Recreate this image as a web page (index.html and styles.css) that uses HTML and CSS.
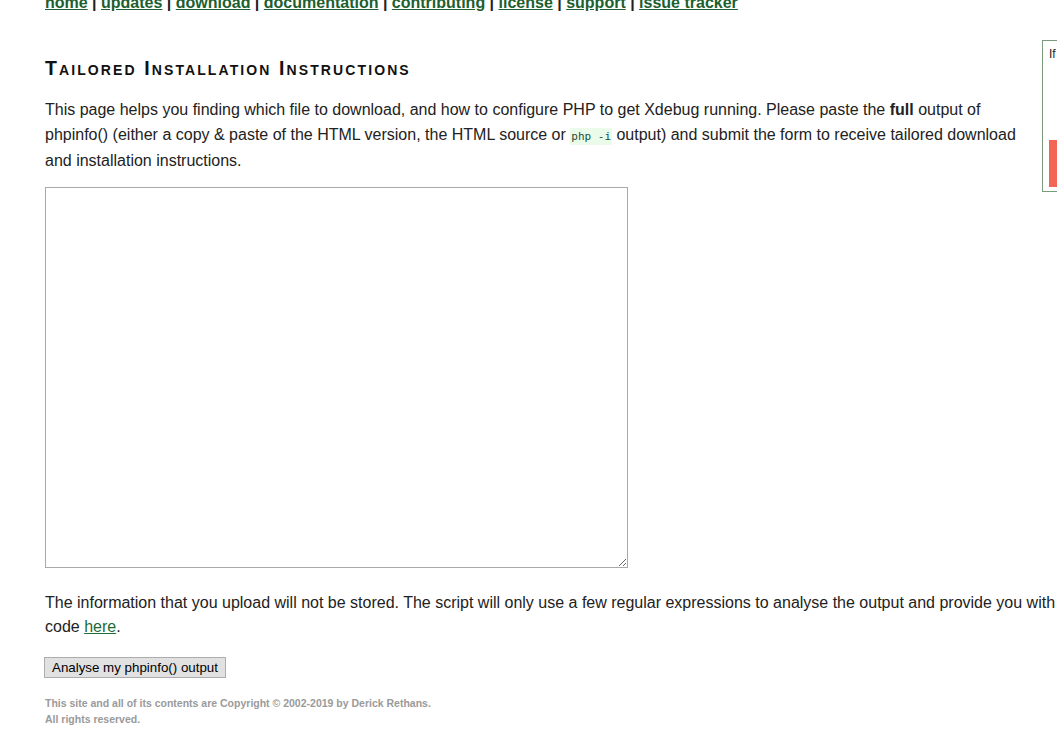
FILE: index.html
```html
<!DOCTYPE html>
<html lang="en">
<head>
<meta charset="utf-8">
<title>Xdebug: Tailored Installation Instructions</title>
<link rel="stylesheet" href="styles.css">
</head>
<body>
<div class="page">
  <nav class="menu">
    <a href="#">home</a> | <a href="#">updates</a> | <a href="#">download</a> | <a href="#">documentation</a> | <a href="#">contributing</a> | <a href="#">license</a> | <a href="#">support</a> | <a href="#">issue tracker</a>
  </nav>
  <div class="content">
    <aside class="sidebar">
      <p class="sidebar-text">If you find Xdebug useful</p>
      <a class="donate" href="#">Donate</a>
    </aside>
    <h2 class="title">Tailored Installation Instructions</h2>
    <p class="text">This page helps you finding which file to download, and how to configure PHP to get Xdebug running. Please paste the <b>full</b> output of phpinfo() (either a copy &amp; paste of the HTML version, the HTML source or <code class="code">php -i</code> output) and submit the form to receive tailored download and installation instructions.</p>
    <form class="wizard">
      <textarea class="paste" name="data"></textarea>
      <p class="text">The information that you upload will not be stored. The script will only use a few regular expressions to analyse the output and provide you with its source code <a class="link" href="#">here</a>.</p>
      <button class="submit" type="button">Analyse my phpinfo() output</button>
    </form>
    <footer class="footer">This site and all of its contents are Copyright &copy; 2002-2019 by Derick Rethans.<br>All rights reserved.</footer>
  </div>
</div>
</body>
</html>
```
FILE: styles.css
```css
html {
  overflow: hidden;
}
body {
  margin: 0;
  font-family: "Liberation Sans", Arial, sans-serif;
  color: #222;
  background: #fff;
}
.page {
  width: 1100px;
  padding-left: 45px;
}
.menu {
  margin-top: -6px;
  font-size: 16px;
  line-height: 18px;
  font-weight: bold;
  color: #222;
}
.menu a {
  color: #1d5f2f;
  text-decoration: underline;
}
.content {
  display: flow-root;
  margin-top: -2px;
}
.sidebar {
  float: right;
  width: 90px;
  height: 141px;
  margin: 30px 0 0 10px;
  padding: 5px 5px 4px 6px;
  border: 1px solid #7b9a7b;
  display: flex;
  flex-direction: column;
  justify-content: space-between;
}
.sidebar-text {
  margin: 0;
  font-size: 12px;
  line-height: 16px;
  white-space: nowrap;
  color: #222;
}
.donate {
  display: block;
  height: 47px;
  background: #f26656;
  color: #fff;
  text-decoration: none;
  font-size: 14px;
  line-height: 47px;
  padding-left: 20px;
}
.title {
  margin: 47px 0 19px;
  font-size: 19.5px;
  line-height: 22px;
  letter-spacing: 2.1px;
  font-variant: small-caps;
  font-weight: bold;
  color: #111;
}
.text {
  margin: 0;
  font-size: 16px;
  line-height: 24.5px;
}
.content > .text {
  margin-bottom: 13px;
}
.code {
  font-family: "DejaVu Sans Mono", monospace;
  font-size: 11px;
  background: #eafbea;
  color: #1d4f3a;
  padding: 2px 1px;
}
.wizard {
  margin: 0;
}
.paste {
  display: block;
  box-sizing: border-box;
  width: 583px;
  height: 381px;
  margin: 0 0 23px -1px;
  border: 1px solid #a9a9a9;
  resize: both;
}
.link {
  color: #1d6b35;
}
.submit {
  display: block;
  margin: 17px 0 0 -1px;
  height: 21px;
  padding: 0 7px;
  font-family: "Liberation Sans", Arial, sans-serif;
  font-size: 13.33px;
  color: #000;
  background: #e1e1e1;
  border: 1px solid #adadad;
  border-radius: 0;
}
.footer {
  margin-top: 17px;
  font-size: 10.5px;
  line-height: 16px;
  font-weight: bold;
  color: #9a9a9a;
}
```
